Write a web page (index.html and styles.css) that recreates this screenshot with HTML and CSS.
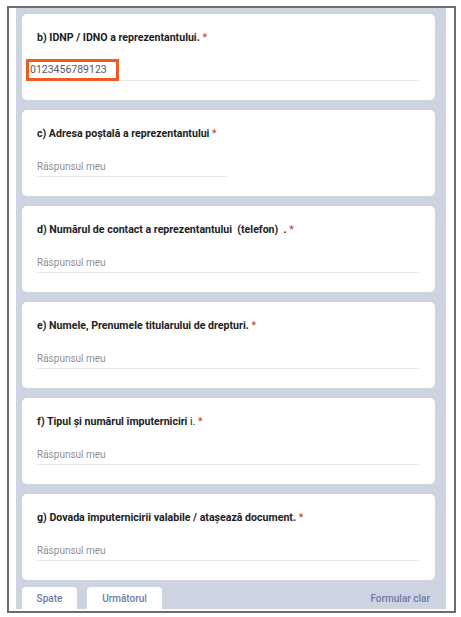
FILE: index.html
```html
<!DOCTYPE html>
<html lang="ro">
<head>
<meta charset="utf-8">
<link rel="stylesheet" href="styles.css">
</head>
<body>
<div class="frame">
  <div class="panel">
    <div class="card">
      <div class="q-title">b) IDNP / IDNO a reprezentantului. <span class="req">*</span></div>
      <div class="answer"><span class="placeholder">&nbsp;</span></div>
      <div class="highlight">0123456789123</div>
    </div>
    <div class="card">
      <div class="q-title">c) Adresa poștală a reprezentantului <span class="req">*</span></div>
      <div class="answer half"><span class="placeholder">Răspunsul meu</span></div>
    </div>
    <div class="card">
      <div class="q-title">d) Numărul de contact a reprezentantului&nbsp; (telefon)&nbsp; . <span class="req">*</span></div>
      <div class="answer"><span class="placeholder">Răspunsul meu</span></div>
    </div>
    <div class="card">
      <div class="q-title">e) Numele, Prenumele titularului de drepturi. <span class="req">*</span></div>
      <div class="answer"><span class="placeholder">Răspunsul meu</span></div>
    </div>
    <div class="card">
      <div class="q-title">f) Tipul și numărul împuterniciri <span class="light">i.</span> <span class="req">*</span></div>
      <div class="answer"><span class="placeholder">Răspunsul meu</span></div>
    </div>
    <div class="card">
      <div class="q-title">g) Dovada împuternicirii valabile / atașează document. <span class="req">*</span></div>
      <div class="answer"><span class="placeholder">Răspunsul meu</span></div>
    </div>
    <div class="nav">
      <div class="tab">Spate</div>
      <div class="tab tab-wide">Următorul</div>
      <span class="clear">Formular clar</span>
    </div>
  </div>
</div>
</body>
</html>
```
FILE: styles.css
```css
* { box-sizing: border-box; }
html, body { margin: 0; padding: 0; background: #ffffff; }
body { font-family: Roboto, "Liberation Sans", sans-serif; color: #202124; }

.frame {
  margin: 6px 0 0 7px;
  width: 449px;
  height: 607px;
  border: 2px solid #6d6d6d;
  padding: 0 8px 2px 7px;
}

.panel {
  height: 100%;
  background: #cdd3e1;
  padding: 6px 11px 0 6px;
  display: flex;
  flex-direction: column;
  gap: 10px;
  overflow: hidden;
}

.card {
  position: relative;
  height: 86px;
  flex: none;
  background: #ffffff;
  border-radius: 5px;
  padding: 16px 16px 0 15px;
}

.q-title {
  font-size: 10.6px;
  font-weight: 700;
  line-height: 15px;
  white-space: nowrap;
}
.q-title .light { font-weight: 400; }
.req { color: #d93025; font-weight: 400; }

.answer {
  margin-top: 19px;
  line-height: 14px;
  padding-bottom: 2px;
  border-bottom: 1px solid #e6e6e6;
  font-size: 10px;
}
.answer.half { width: 50%; }
.placeholder { color: #8c9196; }

.highlight {
  position: absolute;
  left: 4px;
  top: 45px;
  width: 93px;
  height: 22px;
  border: 3px solid #f05a1e;
  background: #ffffff;
  font-size: 10.5px;
  line-height: 16px;
  padding-left: 1px;
  color: #55595e;
}

.nav {
  flex: 1;
  margin-top: -3px;
  display: flex;
  align-items: stretch;
  gap: 10px;
}
.tab {
  width: 55px;
  background: #ffffff;
  border-radius: 4px 4px 0 0;
  font-size: 10px;
  font-weight: 500;
  color: #6f7ba6;
  display: flex;
  align-items: center;
  justify-content: center;
}
.tab-wide { width: 75px; }
.clear {
  margin-left: auto;
  align-self: center;
  padding-right: 5px;
  font-size: 10px;
  font-weight: 500;
  color: #6f7ba6;
}
```
